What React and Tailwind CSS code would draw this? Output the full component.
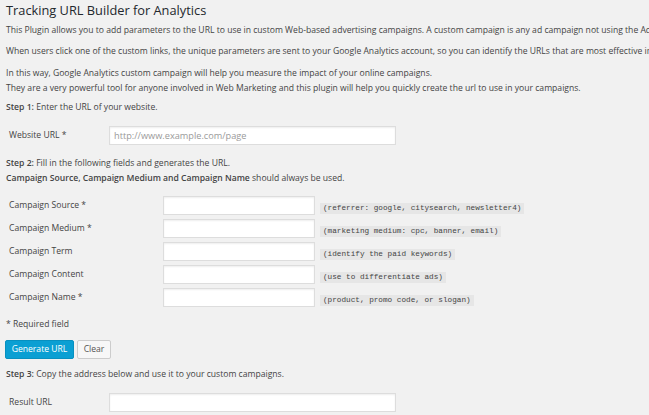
const fields = [
  { label: "Campaign Source *", hint: "(referrer: google, citysearch, newsletter4)" },
  { label: "Campaign Medium *", hint: "(marketing medium: cpc, banner, email)" },
  { label: "Campaign Term", hint: "(identify the paid keywords)" },
  { label: "Campaign Content", hint: "(use to differentiate ads)" },
  { label: "Campaign Name *", hint: "(product, promo code, or slogan)" },
];

function TextInput({ className = "", placeholder }) {
  return (
    <input
      type="text"
      placeholder={placeholder}
      className={`h-[19px] bg-white border border-[#dddddd] shadow-[inset_0_1px_2px_rgba(0,0,0,0.07)] px-[4px] text-[9.2px] text-[#333] placeholder:text-[#9a9a9a] outline-none ${className}`}
    />
  );
}

export default function App() {
  return (
    <div className="w-[649px] h-[415px] overflow-hidden bg-[#f1f1f1] text-[#444] font-['Open_Sans',sans-serif] text-[8.6px] leading-[15px] whitespace-nowrap">
      <div className="pl-[6px]">
        <h2 className="text-[12.8px] leading-[20px] text-[#23282d] font-normal">
          Tracking URL Builder for Analytics
        </h2>

        <p className="mt-[3px]">
          This Plugin allows you to add parameters to the URL to use in custom Web-based advertising campaigns. A custom campaign is any ad campaign not using the AdWords auto-tagging feature.
        </p>
        <p className="mt-[6px]">
          When users click one of the custom links, the unique parameters are sent to your Google Analytics account, so you can identify the URLs that are most effective in attracting users to your content.
        </p>
        <p className="mt-[7px]">
          In this way, Google Analytics custom campaign will help you measure the impact of your online campaigns.
          <br />
          They are a very powerful tool for anyone involved in Web Marketing and this plugin will help you quickly create the url to use in your campaigns.
        </p>

        <p className="mt-[4px]">
          <span className="font-semibold">Step 1:</span> Enter the URL of your website.
        </p>

        <div className="mt-[11px] flex items-center pl-[3px]">
          <span className="w-[100px]">Website URL *</span>
          <TextInput className="w-[287px]" placeholder="http://www.example.com/page" />
        </div>

        <p className="mt-[11px]">
          <span className="font-semibold">Step 2:</span> Fill in the following fields and generates the URL.
          <br />
          <span className="font-semibold">Campaign Source, Campaign Medium and Campaign Name</span> should always be used.
        </p>

        <div className="mt-[10px] flex flex-col gap-[4px] pl-[3px]">
          {fields.map((f) => (
            <div key={f.label} className="flex items-center">
              <span className="w-[154px]">{f.label}</span>
              <TextInput className="w-[152px]" />
              <code className="ml-[5px] mt-[5px] bg-[#e6e6e6] px-[3px] font-['Liberation_Mono',monospace] text-[7.7px] leading-[11px] text-[#444]">
                {f.hint}
              </code>
            </div>
          ))}
        </div>

        <p className="mt-[10px]">* Required field</p>

        <div className="mt-[8px] flex items-center gap-[3px] -ml-[1px]">
          <button className="w-[69px] h-[19px] bg-[#0a9fd3] border border-[#0790c0] rounded-[2px] text-white text-[8.6px] leading-[17px]">
            Generate URL
          </button>
          <button className="w-[34px] h-[19px] bg-[#f7f7f7] border border-[#cccccc] rounded-[2px] text-[#555] text-[8.6px] leading-[17px]">
            Clear
          </button>
        </div>

        <p className="mt-[8px]">
          <span className="font-semibold">Step 3:</span> Copy the address below and use it to your custom campaigns.
        </p>

        <div className="mt-[11px] flex items-center pl-[3px]">
          <span className="w-[100px]">Result URL</span>
          <TextInput className="w-[287px]" />
        </div>
      </div>
    </div>
  );
}
